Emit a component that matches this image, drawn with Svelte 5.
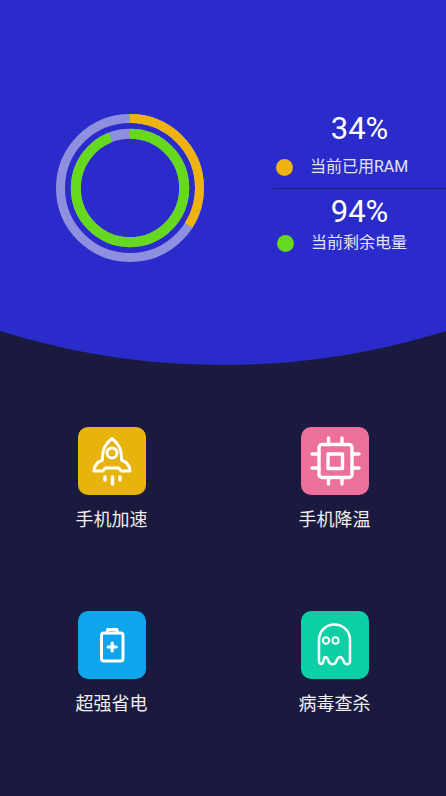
<script>
  // ring percentages as shown on the page
  const R_OUT = 69.5;
  const R_IN = 54.2;
  const dash = (r, pct) => {
    const c = 2 * Math.PI * r;
    return `${(c * pct) / 100} ${c}`;
  };
  const tools = [
    { id: "rocket", label: "手机加速", color: "#e9b30e" },
    { id: "chip", label: "手机降温", color: "#ec7099" },
    { id: "battery", label: "超强省电", color: "#0ea5ec" },
    { id: "ghost", label: "病毒查杀", color: "#0ccfa5" },
  ];
</script>

<div class="page">
  <section class="hero">
    <div class="ring">
      <svg width="160" height="160" viewBox="0 0 160 160">
        <g fill="none" transform="rotate(-90 80 80)">
          <circle cx="80" cy="80" r={R_OUT} stroke="#8f8fdf" stroke-width="9" />
          <circle cx="80" cy="80" r={R_OUT} stroke="#eeb211" stroke-width="9" stroke-dasharray={dash(R_OUT, 34)} />
          <circle cx="80" cy="80" r={R_IN} stroke="#8f8fdf" stroke-width="10" />
          <circle cx="80" cy="80" r={R_IN} stroke="#66d91e" stroke-width="10" stroke-dasharray={dash(R_IN, 94)} />
        </g>
      </svg>
    </div>
    <div class="stats">
      <div class="stat first">
        <p class="num">34%</p>
        <p class="name"><i style="background:#eeb211"></i>当前已用RAM</p>
      </div>
      <div class="stat second">
        <p class="num">94%</p>
        <p class="name"><i style="background:#66d91e"></i>当前剩余电量</p>
      </div>
    </div>
  </section>

  <section class="grid">
    {#each tools as t}
      <div class="tool">
        <div class="tile" style="background:{t.color}">
          <svg width="68" height="68" viewBox="0 0 68 68" fill="none" stroke="#fff" stroke-width="3" stroke-linecap="round" stroke-linejoin="round">
            {#if t.id === "rocket"}
              <path d="M34 11.5 C28 16 24.5 23 24.5 30 L24.5 33 C19.5 35 16 39 16 44 L25 44 L27 41 L41 41 L43 44 L52 44 C52 39 48.5 35 43.5 33 L43.5 30 C43.5 23 40 16 34 11.5 Z" />
              <circle cx="34" cy="26" r="5" />
              <path d="M27 50 V53 M34.5 50 V57 M42 50 V53" stroke-width="3.4" />
            {:else if t.id === "chip"}
              <rect x="18" y="17.5" width="33" height="33" rx="3" stroke-width="3.4" />
              <rect x="27" y="27" width="14.5" height="14.5" stroke-width="3.4" />
              <path d="M27.5 11 V17 M41 11 V17 M27.5 51 V57 M41 51 V57 M11 27 H18 M11 41 H18 M51 27 H58 M51 41 H58" stroke-width="3.4" />
            {:else if t.id === "battery"}
              <rect x="23.5" y="22" width="21.5" height="28" rx="2.5" />
              <path d="M29.5 22 V18.5 H39 V22" />
              <path d="M34.2 32 V40 M30.2 36 H38.2" stroke-width="3.2" />
            {:else}
              <path d="M18 50 V29 C18 20 25 13.5 33.5 13.5 C42 13.5 49 20 49 29 V50 C49 53 45.5 54.5 43.5 52 C42 49 41.5 46 39 46 C36.5 46 36 49 35 51 C33.5 54 29.5 54 28 51 C27 49 26.5 46 24.5 46 C22.5 46 23 49 22 51.5 C21 54 18 53 18 50 Z" stroke-width="2.5" />
              <circle cx="25" cy="29.5" r="3.2" stroke-width="2" />
              <circle cx="34.5" cy="29.5" r="3.2" stroke-width="2" />
            {/if}
          </svg>
        </div>
        <p class="label">{t.label}</p>
      </div>
    {/each}
  </section>
</div>

<style>
  :global(body) {
    margin: 0;
    background: #1a1a3e;
  }
  .page {
    width: 446px;
    height: 796px;
    overflow: hidden;
    background: #1a1a3e;
    font-family: Roboto, "Noto Sans CJK SC", sans-serif;
    color: #fff;
  }
  .hero {
    height: 365px;
    background: #2b2bcb;
    clip-path: circle(748px at 50% -383px);
    display: flex;
    box-sizing: border-box;
    padding: 108px 0 0 50px;
  }
  .ring {
    width: 160px;
    height: 160px;
    flex: none;
  }
  .ring svg {
    display: block;
  }
  .stats {
    margin-left: 63px;
    flex: 1;
    padding-top: 3px;
  }
  .stat {
    text-align: center;
  }
  .first {
    height: 77px;
    border-bottom: 1px solid #1f2070;
  }
  .num {
    margin: 0;
    font-size: 31px;
    font-weight: 400;
    line-height: 36px;
    width: 173px;
  }
  .name {
    margin: 9px 0 0;
    display: flex;
    align-items: center;
    font-size: 16px;
    line-height: 22px;
    color: #e3e3f8;
    padding-left: 3px;
  }
  .second .num {
    margin-top: 5px;
  }
  .second .name {
    margin-top: 2px;
    padding-left: 4px;
  }
  .name i {
    width: 17px;
    height: 17px;
    border-radius: 50%;
    margin-right: 17px;
    flex: none;
  }
  .grid {
    display: grid;
    grid-template-columns: 223px 223px;
    grid-auto-rows: 184px;
    padding-top: 62px;
  }
  .tool {
    display: flex;
    flex-direction: column;
    align-items: center;
  }
  .tile {
    width: 68px;
    height: 68px;
    border-radius: 10px;
  }
  .tile svg {
    display: block;
  }
  .label {
    margin: 12px 0 0;
    font-size: 18px;
    line-height: 26px;
    color: #f0f0f5;
  }
</style>
